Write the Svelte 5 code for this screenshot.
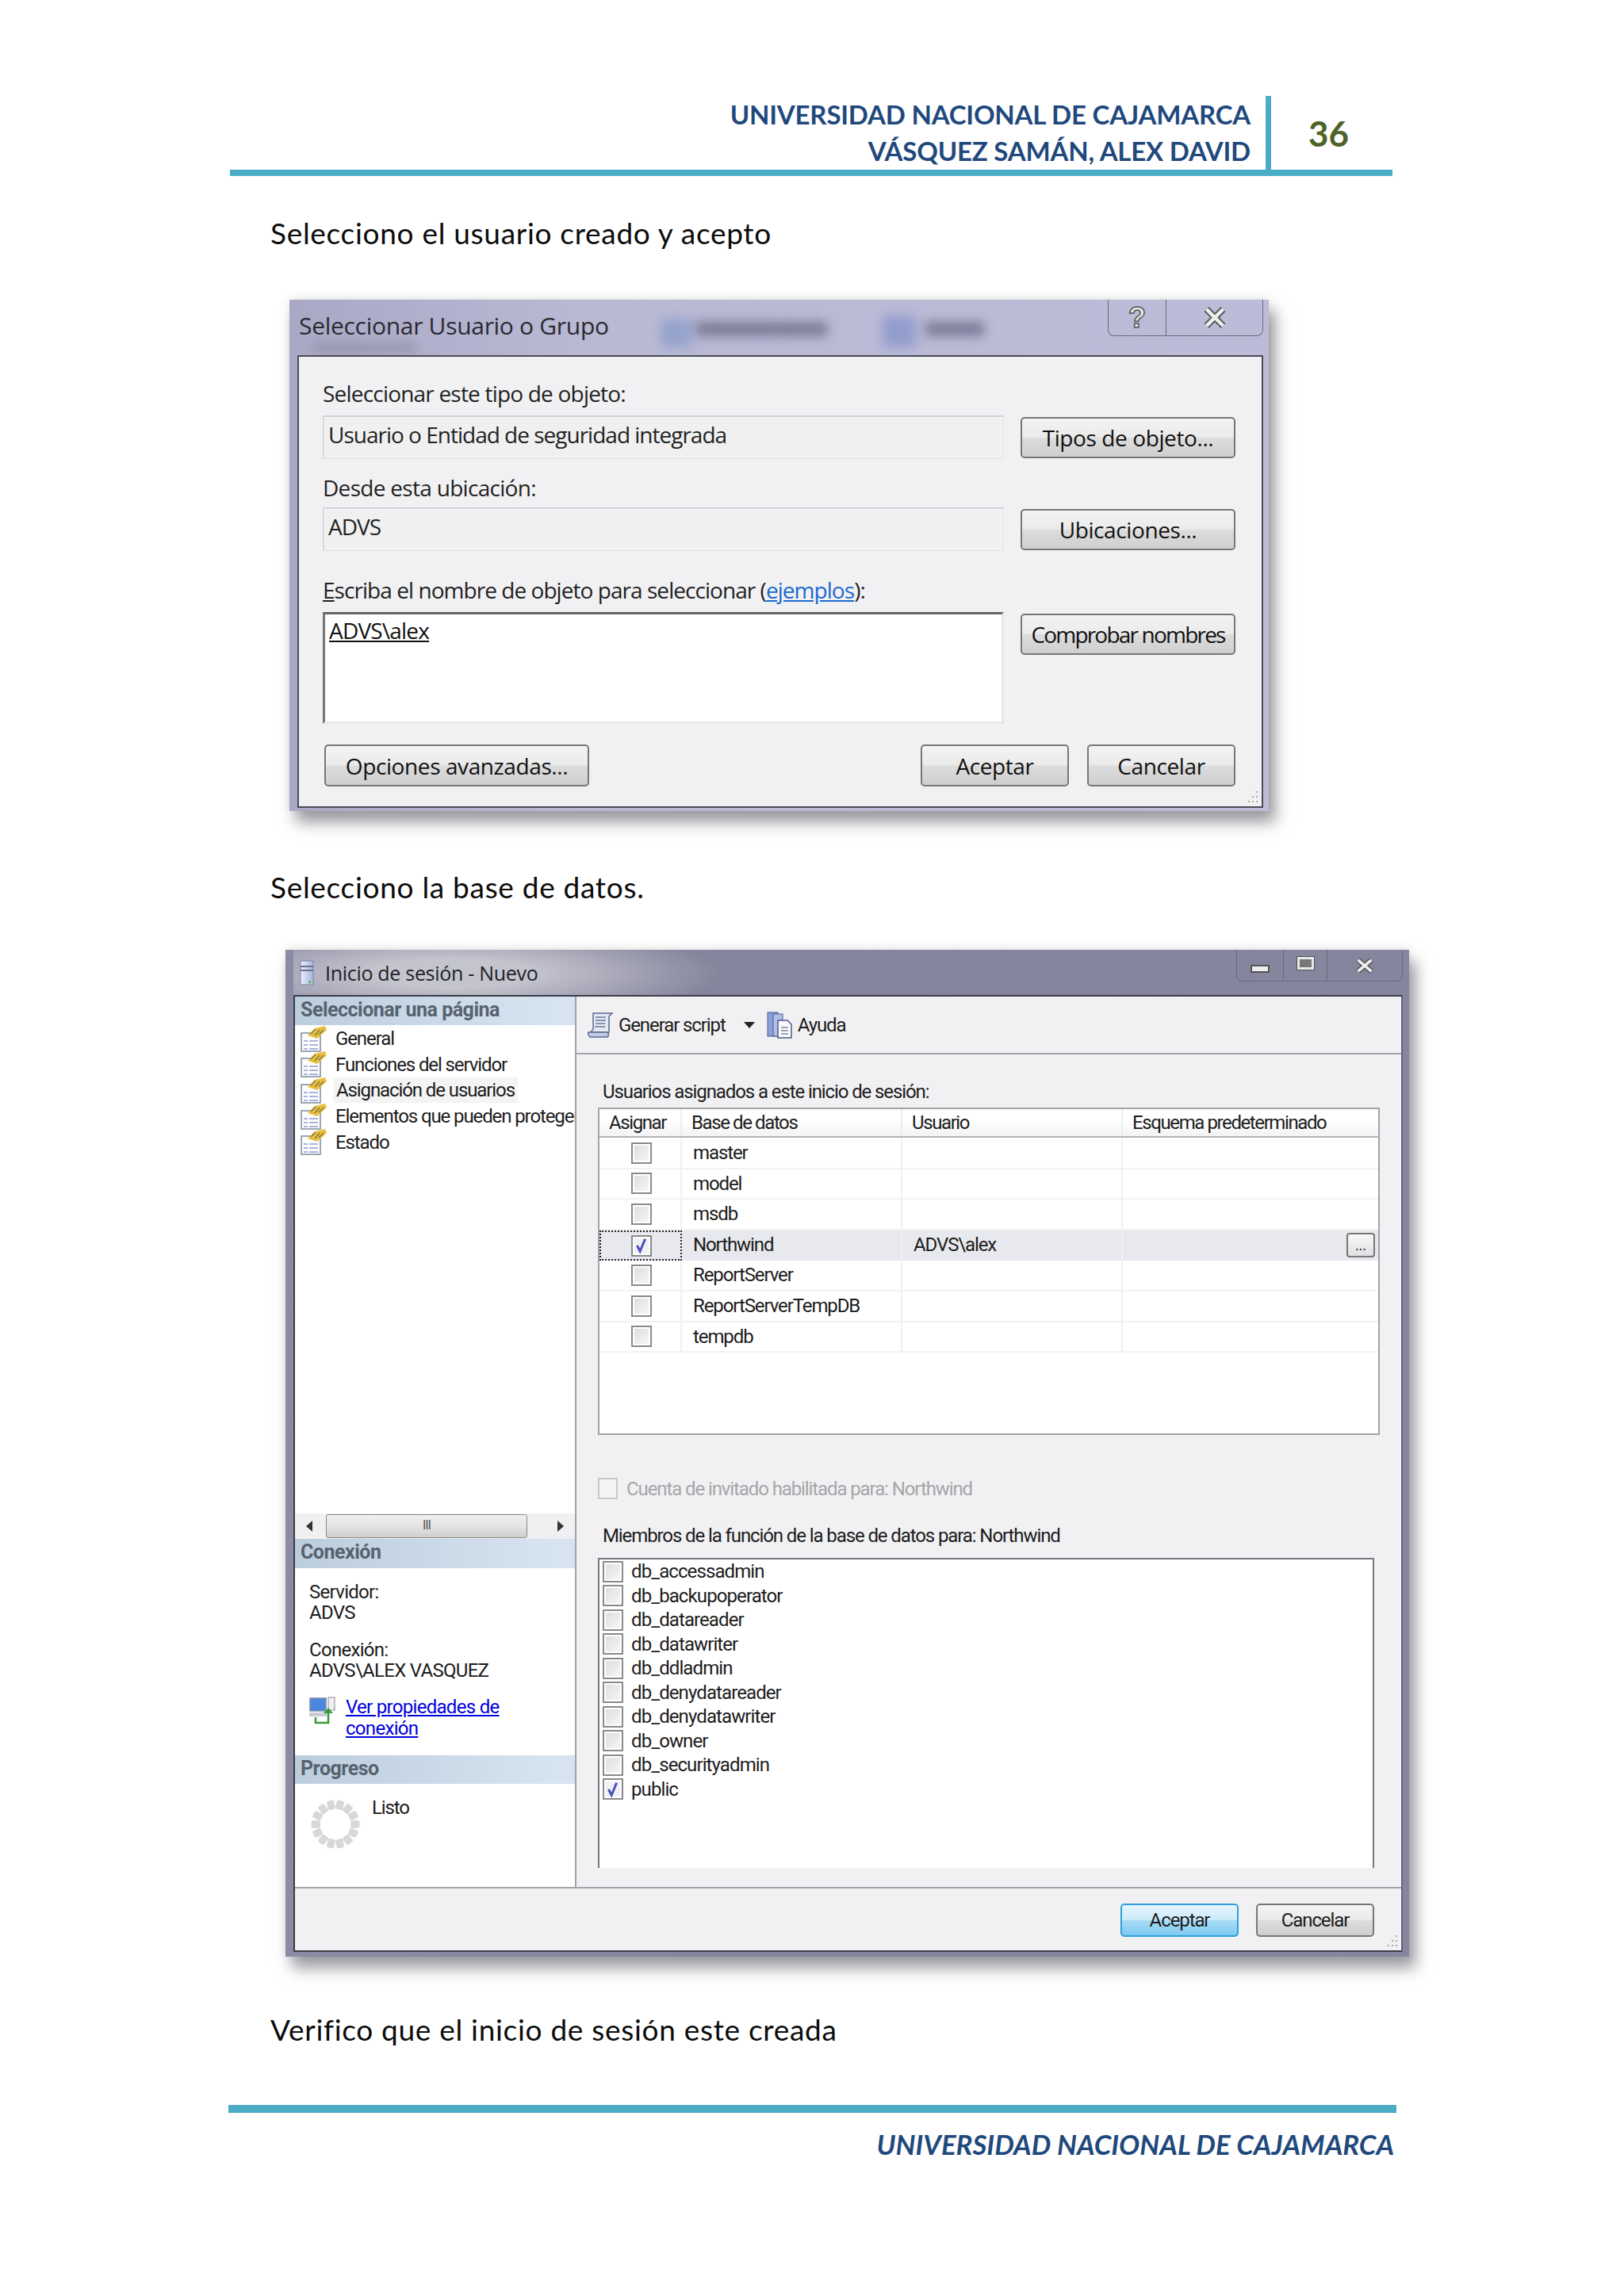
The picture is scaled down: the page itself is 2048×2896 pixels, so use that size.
<script>
  const pages = [
    { label: 'General' },
    { label: 'Funciones del servidor' },
    { label: 'Asignación de usuarios', active: true },
    { label: 'Elementos que pueden proteger' },
    { label: 'Estado' }
  ];
  const dbs = [
    { name: 'master' },
    { name: 'model' },
    { name: 'msdb' },
    { name: 'Northwind', user: 'ADVS\\alex', on: true },
    { name: 'ReportServer' },
    { name: 'ReportServerTempDB' },
    { name: 'tempdb' }
  ];
  const roles = ['db_accessadmin','db_backupoperator','db_datareader','db_datawriter','db_ddladmin','db_denydatareader','db_denydatawriter','db_owner','db_securityadmin','public'];
  const dots = Array.from({ length: 14 }, (_, i) => {
    const a = (i / 14) * Math.PI * 2;
    return { x: 30 + 24 * Math.cos(a), y: 30 + 24 * Math.sin(a), r: (i * 360) / 14 + 90 };
  });
</script>

{#snippet check(on)}
  <span class="cb" class:on>
    {#if on}<svg viewBox="0 0 24 24" width="22" height="22"><path d="M6 12l4 8 7-17" fill="none" stroke="#4650b8" stroke-width="3.2"/></svg>{/if}
  </span>
{/snippet}

{#snippet pageIcon()}
  <svg class="picon" viewBox="0 0 33 33" width="33" height="33">
    <rect x="1" y="9" width="24" height="23" fill="#fdfdfd" stroke="#7c8a9a" stroke-width="1.5"/>
    <path d="M4 19h5M11 19h11M4 24h5M11 24h11M4 29h5M11 29h11" stroke="#aab4de" stroke-width="2.2"/>
    <path d="M9 12L18 3l13-3 2 5-12 11z" fill="#e8c040"/>
    <path d="M13 10l6-6M18 12l6-7M23 11l6-6" stroke="#7a7040" stroke-width="1.2"/>
  </svg>
{/snippet}

{#snippet grip()}
  <svg class="grip" viewBox="0 0 20 20" width="20" height="20" fill="#a8a8a8">
    <rect x="15" y="3" width="2" height="2"/><rect x="10" y="9" width="2" height="2"/><rect x="15" y="9" width="2" height="2"/>
    <rect x="5" y="15" width="2" height="2"/><rect x="10" y="15" width="2" height="2"/><rect x="15" y="15" width="2" height="2"/>
  </svg>
{/snippet}

<div class="page">
  <header class="top">
    <div class="names">
      <div>UNIVERSIDAD NACIONAL DE CAJAMARCA</div>
      <div>VÁSQUEZ SAMÁN, ALEX DAVID</div>
    </div>
    <div class="num">36</div>
  </header>

  <p class="para p1">Selecciono el usuario creado y acepto</p>

  <section class="win win1">
    <div class="bar">
      <span class="ttl">Seleccionar Usuario o Grupo</span>
      <i class="smear s1"></i><i class="smear s2"></i><i class="smear s3"></i><i class="smear s4"></i><i class="smear s5"></i>
      <div class="ctrls">
        <span class="ctl c-help">?</span>
        <span class="ctl c-close">
          <svg viewBox="0 0 20 18" width="30" height="27"><path d="M3 2l14 14M17 2L3 16" stroke="#555" stroke-width="5.5"/><path d="M3 2l14 14M17 2L3 16" stroke="#eee" stroke-width="3"/></svg>
        </span>
      </div>
    </div>
    <div class="body1">
      <span class="lab">Seleccionar este tipo de objeto:</span>
      <div class="field">Usuario o Entidad de seguridad integrada</div>
      <button class="btn b-side">Tipos de objeto...</button>
      <span class="lab mid">Desde esta ubicación:</span>
      <div class="field">ADVS</div>
      <button class="btn b-side">Ubicaciones...</button>
      <span class="lab long"><u>E</u>scriba el nombre de objeto para seleccionar (<a href="#e">ejemplos</a>):</span>
      <div class="names-box"><u>ADVS\alex</u></div>
      <button class="btn b-side b-top b-tight">Comprobar nombres</button>
      <div class="actions">
        <button class="btn b-opt">Opciones avanzadas...</button>
        <span class="fill"></span>
        <button class="btn b-ok">Aceptar</button>
        <button class="btn b-ok">Cancelar</button>
      </div>
      {@render grip()}
    </div>
  </section>

  <p class="para p2">Selecciono la base de datos.</p>

  <section class="win win2">
    <div class="bar">
      <svg class="srv" viewBox="0 0 18 32" width="18" height="32">
        <defs><linearGradient id="sv" x1="0" x2="1"><stop offset="0" stop-color="#e8eefc"/><stop offset="1" stop-color="#a8b8dc"/></linearGradient></defs>
        <rect x="1" y="1" width="16" height="30" fill="url(#sv)" stroke="#7a86a8"/>
        <path d="M1 8h16M1 13h16" stroke="#68708c" stroke-width="2"/>
        <rect x="11" y="26" width="3" height="3" fill="#60c040"/>
      </svg>
      <span class="ttl">Inicio de sesión - Nuevo</span>
      <div class="ctrls">
        <span class="ctl c-min"><i></i></span>
        <span class="ctl c-max"><i></i></span>
        <span class="ctl c-x">
          <svg viewBox="0 0 20 16" width="24" height="20"><path d="M3 2l14 12M17 2L3 14" stroke="#555" stroke-width="5.5"/><path d="M3 2l14 12M17 2L3 14" stroke="#eee" stroke-width="3"/></svg>
        </span>
      </div>
    </div>
    <div class="body2">
      <div class="main">
        <aside class="side">
          <h4>Seleccionar una página</h4>
          <ul class="plist">
            {#each pages as p}
              <li>{@render pageIcon()}<span class:act={p.active}>{p.label}</span></li>
            {/each}
          </ul>
          <div class="hscroll">
            <svg viewBox="0 0 8 14" width="8" height="14"><path d="M8 0v14L0 7z" fill="#333"/></svg>
            <div class="thumb"><span>III</span></div>
            <svg viewBox="0 0 8 14" width="8" height="14"><path d="M0 0v14l8-7z" fill="#333"/></svg>
          </div>
          <h4 class="h-conn">Conexión</h4>
          <div class="conn">
            <div>Servidor:<br />ADVS</div>
            <div class="c2">Conexión:<br />ADVS\ALEX VASQUEZ</div>
            <div class="linkrow">
              <svg viewBox="0 0 33 36" width="33" height="36">
                <rect x="1" y="2" width="20" height="16" fill="#4a88e0" stroke="#7a8aa0" stroke-width="1.5"/>
                <rect x="0" y="20" width="22" height="5" fill="#c8ccd4"/>
                <rect x="24" y="1" width="8" height="16" fill="#f0f0f0" stroke="#889" />
                <path d="M8 26v7h16V20" fill="none" stroke="#3a9a3a" stroke-width="2.5"/>
                <path d="M18 21l6-7 6 7z" fill="#3a9a3a"/>
              </svg>
              <a href="#c">Ver propiedades de <br />conexión</a>
            </div>
          </div>
          <h4 class="h-prog">Progreso</h4>
          <div class="prog">
            <svg class="spin" viewBox="0 0 60 60" width="62" height="62">
              {#each dots as d}
                <rect x={d.x - 4.5} y={d.y - 5.5} width="9" height="11" rx="2" fill="#d8d8d8" transform="rotate({d.r} {d.x} {d.y})"/>
              {/each}
            </svg>
            <span>Listo</span>
          </div>
        </aside>
        <div class="pane">
          <div class="tools">
            <svg viewBox="0 0 33 33" width="33" height="33">
              <path d="M7 2h24l-4 4v20H4l3-4z" fill="#e4e8f0" stroke="#5a6a90" stroke-width="1.5"/>
              <path d="M1 26h24q3 3 0 6H3q-3-3-2-6z" fill="#c4cce4" stroke="#5a6a90" stroke-width="1.5"/>
              <path d="M10 7h13M10 11h13M10 15h12M9 19h13" stroke="#6a7a9c" stroke-width="1.6"/>
            </svg>
            <span class="t1">Generar script</span>
            <svg class="drop" viewBox="0 0 14 8" width="14" height="8"><path d="M0 0h14L7 8z" fill="#222"/></svg>
            <svg class="help" viewBox="0 0 32 34" width="32" height="34">
              <rect x="1" y="1" width="13" height="30" fill="#8aa0d8" stroke="#4a5a90"/>
              <rect x="8" y="3" width="12" height="28" fill="#b0c0e8" stroke="#4a5a90"/>
              <path d="M14 11h12l5 5v17H14z" fill="#fafafa" stroke="#4a5a90" stroke-width="1.5"/>
              <path d="M18 20h9M18 24h9M18 28h9" stroke="#7a86a8" stroke-width="1.5"/>
            </svg>
            <span class="t2">Ayuda</span>
          </div>
          <div class="content">
            <div class="l1">Usuarios asignados a este inicio de sesión:</div>
            <div class="grid">
              <div class="ghead row">
                <span>Asignar</span><span>Base de datos</span><span>Usuario</span><span>Esquema predeterminado</span>
              </div>
              {#each dbs as d}
                <div class="row drow" class:sel={d.on}>
                  <span class="cell-c" class:focus={d.on}>{@render check(d.on)}</span>
                  <span class="cell-n">{d.name}</span>
                  <span class="cell-u">{d.user ?? ''}</span>
                  <span class="cell-e">{#if d.on}<button class="more">...</button>{/if}</span>
                </div>
              {/each}
            </div>
            <div class="guest"><span class="cb dis"></span><span>Cuenta de invitado habilitada para: Northwind</span></div>
            <div class="l2">Miembros de la función de la base de datos para: Northwind</div>
            <div class="rolelist">
              {#each roles as r}
                <div class="role">{@render check(r === 'public')}<span>{r}</span></div>
              {/each}
            </div>
          </div>
        </div>
      </div>
      <div class="foot">
        <button class="btn f-ok def">Aceptar</button>
        <button class="btn f-ok">Cancelar</button>
      </div>
      {@render grip()}
    </div>
  </section>

  <p class="para p3">Verifico que el inicio de sesión este creada</p>

  <footer class="bottom">UNIVERSIDAD NACIONAL DE CAJAMARCA</footer>
</div>

<style>
  :global(body) { margin: 0; background: #fff; }
  .page { width: 2048px; height: 2896px; overflow: hidden; font-family: "Open Sans", "Liberation Sans", sans-serif; color: #111; }
  button { font-family: inherit; color: inherit; padding: 0; }
  p { margin: 0; }

  .top { margin: 0 0 0 290px; width: 1466px; height: 93px; padding-top: 121px; border-bottom: 8px solid #4bacc6; display: flex; justify-content: flex-end; font-family: Lato, "Open Sans", sans-serif; }
  .names { text-align: right; padding-right: 19px; font-weight: 700; font-size: 33px; letter-spacing: -.2px; line-height: 46px; color: #1f497d; white-space: nowrap; }
  .num { padding-right: 8px; border-left: 7px solid #4bacc6; color: #4f6228; font-weight: 700; font-size: 44px; text-align: center; line-height: 94px; width: 145px; }

  .para { font-family: Lato, "Open Sans", sans-serif; font-size: 37px; letter-spacing: .7px; font-variant-ligatures: none; line-height: 50px; margin-left: 341px; color: #0c0c0c; white-space: nowrap; }
  .p1 { margin-top: 47px; }
  .p2 { margin-top: 71px; }
  .p3 { margin-top: 67px; }

  .win { position: relative; box-sizing: border-box; box-shadow: 8px 14px 18px rgba(70,70,80,.55), 0 -3px 10px rgba(0,0,0,.08); }
  .win1 { margin: 59px 0 0 365px; width: 1235px; height: 645px; padding: 0 7px 4px 10px; background: linear-gradient(90deg, #a9a9c6, #b9b9d4 30%, #bcbcd8); }
  .win2 { margin: 54px 0 0 360px; width: 1417px; height: 1270px; padding: 0 8px 6px 10px; background: linear-gradient(90deg, #8b8ba3, #84849c 40%, #85859d); }

  .bar { position: relative; display: flex; align-items: center; }
  .win1 .bar { height: 70px; padding-bottom: 5px; box-sizing: border-box; }
  .win2 .bar { height: 57px; padding-left: 8px; background: radial-gradient(ellipse 340px 60px at 200px 30px, #c4c4ce 30%, transparent 100%); }
  .ttl { white-space: nowrap; color: #222; }
  .win1 .ttl { font-size: 30px; letter-spacing: -.3px; margin: 0 0 0 2px; color: #2a2a30; }
  .win2 .ttl { font-size: 25px; letter-spacing: -.3px; margin-left: 14px; color: #1e1e28; }
  .smear { position: absolute; background: #7c80a8; filter: blur(7px); opacity: .85; }
  .s1 { left: 20px; top: 56px; width: 130px; height: 10px; background: #8a8aa0; }
  .s2 { left: 458px; top: 24px; width: 40px; height: 36px; background: #90a0cc; }
  .s3 { left: 502px; top: 28px; width: 166px; height: 18px; background: #70708c; }
  .s4 { left: 738px; top: 20px; width: 42px; height: 40px; background: #8c98cc; }
  .s5 { left: 792px; top: 28px; width: 74px; height: 18px; background: #70708c; }
  .ctrls { position: absolute; top: 0; display: flex; border: 1px solid #6a6a80; border-top: 0; border-radius: 0 0 8px 8px; overflow: hidden; }
  .win1 .ctrls { right: 0; height: 45px; }
  .win2 .ctrls { right: 0; height: 39px; }
  .ctl { display: flex; align-items: center; justify-content: center; border-right: 1px solid #6a6a80; color: #eee; }
  .ctl:last-child { border-right: 0; }
  .c-help { width: 72px; font: 700 36px "Liberation Sans", sans-serif; color: #ececec; -webkit-text-stroke: 1.5px #555; }
  .c-close { width: 121px; }
  .c-min { width: 58px; } .c-max { width: 54px; } .c-x { width: 94px; }
  .c-min i { display: block; width: 24px; height: 10px; margin-top: 8px; background: #eee; border: 2px solid #555; box-sizing: border-box; }
  .c-max i { display: block; width: 23px; height: 18px; margin-top: -6px; border: 4px solid #e8e8e8; outline: 1.5px solid #555; outline-offset: -1.5px; background: #777; box-sizing: border-box; }

  .body1 { position: relative; box-sizing: border-box; height: 571px; background: #f1f1f3; border: 2px solid #4a4a55; padding: 33px 0 0 30px; display: grid; grid-template-columns: 859px 271px; column-gap: 21px; grid-template-rows: 41px 55px 61px 55px 77px 141px 79px; font-size: 28px; letter-spacing: -.8px; }
  .lab { grid-column: 1 / 3; align-self: end; line-height: 40px; padding-bottom: 8px; white-space: nowrap; color: #222; }
  .lab.mid { padding-bottom: 5px; letter-spacing: -.7px; }
  .lab.long { letter-spacing: -.95px; }
  .lab a { color: #1a6ad0; }
  .field { border: 2px solid #e4e6e8; border-top-color: #cdd3da; border-left-color: #d4d8dc; background: #f0f0f1; padding: 0 5px; line-height: 44px; letter-spacing: -1px; white-space: nowrap; box-sizing: border-box; box-shadow: inset 0 0 0 1px #f8f8f8; color: #222; }
  .names-box { border: 3px solid #e8e8e8; border-top: 3px solid #666; border-left: 3px solid #777; background: #fff; padding: 0 5px; line-height: 40px; box-sizing: border-box; }
  .btn { border: 2px solid #777; border-radius: 5px; background: linear-gradient(180deg, #f3f3f3 0, #ebebeb 48%, #dcdcdc 52%, #cfcfcf 100%); box-sizing: border-box; white-space: nowrap; font-size: inherit; letter-spacing: inherit; cursor: default; }
  .body1 .btn { letter-spacing: -.4px; }
  .body1 .b-tight { letter-spacing: -1.8px; }
  .b-side { height: 52px; margin-top: 2px; }
  .b-top { align-self: start; }
  .actions { grid-column: 1 / 3; display: flex; gap: 23px; padding-top: 26px; }
  .fill { flex: 1; }
  .b-opt { width: 334px; height: 53px; margin-left: 2px; }
  .b-ok { width: 187px; height: 53px; }
  .grip { position: absolute; right: 2px; bottom: 2px; }

  .body2 { position: relative; box-sizing: border-box; height: 1207px; background: #f1f1f3; border: 2px solid #3c3c46; border-right-color: #66667a; display: flex; flex-direction: column; font-family: Roboto, "Open Sans", sans-serif; font-size: 24px; letter-spacing: -1.1px; color: #1c1c1c; }
  .main { height: 1123px; display: flex; border-bottom: 2px solid #a4a4a8; box-sizing: content-box; }
  .side { width: 353px; background: #fff; border-right: 2px solid #a4a4a8; display: flex; flex-direction: column; flex: none; overflow: hidden; }
  h4 { margin: 0; height: 36px; line-height: 34px; font-size: 25px; font-weight: 700; letter-spacing: -.5px; color: #56626e; padding-left: 7px; background: linear-gradient(90deg, #bccddd, #d6e3f0 90%); white-space: nowrap; flex: none; }
  .plist { list-style: none; margin: 0; padding: 1px 0 0 7px; flex: none; height: 616px; box-sizing: border-box; }
  .plist li { height: 32.6px; display: flex; align-items: center; white-space: nowrap; position: relative; }
  .picon { flex: none; margin-right: 8px; }
  .plist span { padding: 0 3px; line-height: 32px; }
  .act { background: #f4f4f4; padding: 0 4px !important; }
  .hscroll { position: relative; height: 32px; background: #f0f0f2; display: flex; align-items: center; justify-content: space-between; padding: 0 14px; flex: none; }
  .thumb { position: absolute; left: 39px; width: 254px; height: 30px; box-sizing: border-box; border: 1px solid #8a8a8a; border-radius: 3px; background: linear-gradient(180deg, #f0f0f0, #e4e4e4 50%, #cfcfcf); text-align: center; font-size: 16px; line-height: 26px; color: #555; }
  .h-conn { height: 37px; }
  .conn { height: 236px; flex: none; padding: 17px 0 0 18px; box-sizing: border-box; line-height: 26px; letter-spacing: -.7px; }
  .c2 { margin-top: 21px; }
  .linkrow { display: flex; gap: 13px; margin-top: 20px; }
  .linkrow a { color: #0000dc; line-height: 27px; white-space: nowrap; }
  .h-prog { height: 36px; }
  .prog { display: flex; flex: 1; padding: 20px 0 0 20px; gap: 15px; }
  .prog span { line-height: 28px; margin-top: -4px; }
  .spin { flex: none; }

  .pane { flex: 1; display: flex; flex-direction: column; min-width: 0; }
  .tools { height: 71px; border-bottom: 2px solid #a4a4a8; display: flex; align-items: center; padding-left: 14px; flex: none; }
  .t1 { margin-left: 6px; }
  .drop { margin: 0 0 0 23px; }
  .help { margin-left: 15px; }
  .t2 { margin-left: 7px; }
  .content { padding-left: 27px; display: flex; flex-direction: column; }
  .l1 { height: 67px; line-height: 30px; padding: 32px 0 0 6px; box-sizing: border-box; }
  .grid { width: 986px; height: 413px; background: #fff; border: 2px solid #a4a4a8; box-sizing: border-box; flex: none; }
  .row { display: grid; grid-template-columns: 104px 278px 278px 1fr; }
  .ghead { height: 34px; border-bottom: 2px solid #b4b4b8; line-height: 34px; letter-spacing: -1.4px; background: linear-gradient(180deg, #fff 40%, #f3f3f5); margin-bottom: 1px; }
  .ghead span { border-right: 2px solid #ededef; padding-left: 12px; white-space: nowrap; }
  .ghead span:last-child { border: 0; }
  .drow { height: 38.6px; box-sizing: border-box; border-bottom: 2px solid #f2f2f4; line-height: 36px; }
  .drow > span { border-right: 2px solid #f0f0f2; box-sizing: border-box; position: relative; }
  .drow > span:last-child { border: 0; }
  .drow.sel { background: #e8e9ee; border-bottom: 0; }
  .cell-c { display: flex; align-items: center; justify-content: center; padding-left: 3px; }
  .focus { outline: 2px dotted #222; outline-offset: -2px; }
  .cell-n { padding-left: 14px; white-space: nowrap; }
  .cell-u { padding-left: 14px; }
  .cb { width: 26px; height: 27px; box-sizing: border-box; border: 2px solid #8a8a8c; background: linear-gradient(135deg, #dcdcde, #f8f8f8); box-shadow: inset 0 0 0 2px #fff; display: inline-flex; align-items: center; justify-content: center; flex: none; }
  .cb.on { background: #f0f0f6; }
  .cb.dis { border-color: #c8c8ca; box-shadow: none; width: 25px; background: #f4f4f6; }
  .more { position: absolute; right: 4px; top: 3px; width: 36px; height: 31px; border: 2px solid #777; border-radius: 4px; background: linear-gradient(180deg, #f8f8f8, #e0e0e2); font-size: 18px; line-height: 28px; }
  .guest { margin-top: 54px; height: 27px; display: flex; gap: 11px; align-items: center; color: #a6a6a8; white-space: nowrap; }
  .l2 { height: 74px; line-height: 30px; padding: 31px 0 0 6px; box-sizing: border-box; white-space: nowrap; }
  .rolelist { width: 979px; height: 391px; box-sizing: border-box; background: #fff; border: 2px solid #77777c; border-bottom: 0; padding: 0 0 0 4px; letter-spacing: -.9px; }
  .role { height: 30.5px; display: flex; align-items: center; gap: 10px; }
  .foot { flex: 1; display: flex; justify-content: flex-end; gap: 22px; padding: 19px 34px 0 0; }
  .f-ok { width: 149px; height: 42px; }
  .def { border-color: #2ba0dc; background: linear-gradient(180deg, #e6f5fd, #cdeafa 48%, #a8dcf7 52%, #7cc8ee); }

  .bottom { margin: 70px 0 0 288px; width: 1473px; box-sizing: border-box; border-top: 10px solid #4bacc6; padding: 20px 3px 0 0; text-align: right; font-family: Lato, "Open Sans", sans-serif; font-weight: 700; font-style: italic; font-size: 34.8px; color: #1f497d; line-height: 40px; }
</style>
